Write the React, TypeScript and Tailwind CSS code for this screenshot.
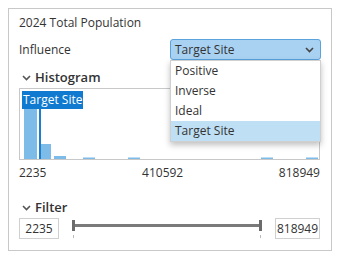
import React from "react";

const Chevron = ({ color = "#555" }: { color?: string }) => (
  <svg width="9" height="6" viewBox="0 0 9 6"><path d="M1 1 L4.5 4.5 L8 1" stroke={color} strokeWidth="1.6" fill="none" /></svg>
);

export default function App() {
  const bars = [
    { l: 4, w: 13, h: 50 },
    { l: 19, w: 12, h: 15 },
    { l: 34, w: 12, h: 3 },
    { l: 63, w: 12, h: 1.5 },
    { l: 108, w: 12, h: 1.5 },
    { l: 241, w: 12, h: 1.5 },
    { l: 286, w: 12, h: 1.5 },
  ];
  return (
    <div className="w-[339px] h-[256px] bg-white pt-[8px] pl-[8px] text-[#333]" style={{ fontFamily: '"Open Sans", "Noto Sans", sans-serif' }}>
      <div className="flex flex-col w-[324px] h-[243px] border border-[#c8c8c8] px-[10px] pt-[6px]">
        <div className="text-[12px] leading-[16px]">2024 Total Population</div>
        <div className="flex items-center justify-between mt-[8px] h-[21px]">
          <div className="text-[12px]">Influence</div>
          <div className="relative w-[151px] h-[21px]">
            <div className="h-full rounded-[3px] border border-[#5aa3dc] bg-[#a9d2f2] flex items-center justify-between pl-[4px] pr-[6px] text-[12px]">
              <span>Target Site</span>
              <Chevron color="#444" />
            </div>
            <div className="absolute left-0 top-[21px] w-[151px] flex flex-col bg-white border border-[#d0d0d0] shadow-[0_3px_6px_rgba(0,0,0,0.25)] z-10 text-[12px]">
              <div className="h-[20px] flex items-center pl-[4px]">Positive</div>
              <div className="h-[20px] flex items-center pl-[4px]">Inverse</div>
              <div className="h-[20px] flex items-center pl-[4px]">Ideal</div>
              <div className="h-[20px] flex items-center pl-[4px] bg-[#bfdff4]">Target Site</div>
            </div>
          </div>
        </div>
        <div className="flex items-center gap-[4px] mt-[9px] h-[18px] pl-[3px] text-[13px] font-semibold">
          <Chevron />
          Histogram
        </div>
        <div className="relative h-[72px] border border-[#c8c8c8] mt-[1px] w-[301px]">
          <svg width="299" height="70" viewBox="0 0 299 70" className="block">
            {bars.map((b, i) => (
              <rect key={i} x={b.l} y={70 - b.h} width={b.w} height={b.h} fill="#7dbbe9" />
            ))}
            <rect x="19" y="15" width="2" height="55" fill="#1a7fcf" />
          </svg>
          <div className="absolute left-[2px] top-[2px] bg-[#0f7ad0] text-white text-[12px] leading-[18px] px-[1px]">Target Site</div>
        </div>
        <div className="flex justify-between text-[12px] leading-[16px] mt-[5px] w-[301px]">
          <span>2235</span>
          <span>410592</span>
          <span>818949</span>
        </div>
        <div className="flex items-center gap-[4px] mt-[18px] h-[18px] pl-[3px] text-[13px] font-semibold">
          <Chevron />
          Filter
        </div>
        <div className="flex items-center justify-between w-[301px] mt-[1px]">
          <div className="w-[40px] h-[21px] border border-[#d0d0d0] flex items-center justify-center text-[12px]">2235</div>
          <svg className="block" width="190" height="21" viewBox="0 0 190 21">
            <rect x="0" y="6" width="190" height="3" fill="#7a7a7a" />
            <rect x="0" y="2" width="3" height="11" fill="#6b6b6b" />
            <rect x="187" y="2" width="3" height="11" fill="#6b6b6b" />
            <rect x="1" y="17" width="1" height="3" fill="#bbb" />
            <rect x="188" y="17" width="1" height="3" fill="#bbb" />
          </svg>
          <div className="w-[45px] h-[21px] border border-[#d0d0d0] flex items-center justify-center text-[12px]">818949</div>
        </div>
      </div>
    </div>
  );
}
